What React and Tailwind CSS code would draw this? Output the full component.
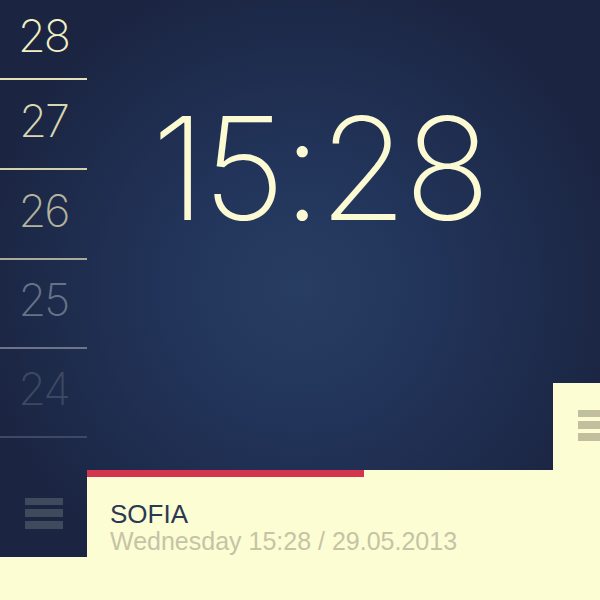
import React from 'react'

const days = [
    { n: '28', text: 'text-[#f3f0c4]', line: 'border-[#e4e1b8]', h: 'h-[80px]' },
    { n: '27', text: 'text-[#d9d7b2]', line: 'border-[#d2d0ad]', h: 'h-[90px]' },
    { n: '26', text: 'text-[#b3b39e]', line: 'border-[#a9aa98]', h: 'h-[90px]' },
    { n: '25', text: 'text-[#687287]', line: 'border-[#6b7488]', h: 'h-[89px]' },
    { n: '24', text: 'text-[#3d4963]', line: 'border-[#3e4a63]', h: 'h-[89px]' },
]

const Burger = ({ color, w }) => (
    <div className={`flex flex-col gap-[4px] ${w}`}>
        <div className={`h-[7px] ${color}`} />
        <div className={`h-[8px] ${color}`} />
        <div className={`h-[8px] ${color}`} />
    </div>
)

const App = () => {
    return (
        <div className="w-[600px] h-[600px] overflow-hidden flex flex-col bg-[radial-gradient(circle_at_50%_48%,#283d62_0%,#22345a_30%,#1b2542_75%)]" style={{ fontFamily: '"Liberation Sans", Arial, sans-serif' }}>
            <div className="h-[557px] flex">
                {/* day column */}
                <div className="w-[87px] flex flex-col">
                    {days.map((d) => (
                        <div key={d.n} className={`${d.h} border-b-2 ${d.line} flex items-center justify-center pb-[8px]`}>
                            <span className={`text-[45px] leading-none font-extralight tracking-[-2px] ${d.text}`} style={{ fontFamily: 'Inter, sans-serif' }}>{d.n}</span>
                        </div>
                    ))}
                    <div className="flex-1 flex justify-center pt-[60px]">
                        <Burger color="bg-[#3d4b5c]" w="w-[38px]" />
                    </div>
                </div>

                {/* main */}
                <div className="flex-1 flex flex-col">
                    <div className="h-[470px] flex flex-col">
                        <div className="h-[383px] flex justify-center pt-[96px]">
                            <span className="text-[143px] leading-none font-extralight text-[#fcfad2] tracking-[-3px] -ml-[48px]" style={{ fontFamily: 'Inter, sans-serif' }}>15:28</span>
                        </div>
                        <div className="flex-1 flex justify-end">
                            <div className="w-[47px] bg-[#fdfdd4] pt-[27px] pl-[25px]">
                                <Burger color="bg-[#c2bf9f]" w="w-[22px]" />
                            </div>
                        </div>
                    </div>
                    <div className="flex-1 bg-[#fdfdd4] flex flex-col">
                        <div className="h-[7px] w-[277px] bg-[#d3344e]" />
                        <div className="pl-[23px] pt-[24px]">
                            <div className="text-[26px] leading-none text-[#2b3952]">SOFIA</div>
                            <div className="text-[25px] leading-none text-[#c5c4a6] mt-[2px]">Wednesday 15:28 / 29.05.2013</div>
                        </div>
                    </div>
                </div>
            </div>
            <div className="flex-1 bg-[#fdfdd4]" />
        </div>
    )
}

export default App
